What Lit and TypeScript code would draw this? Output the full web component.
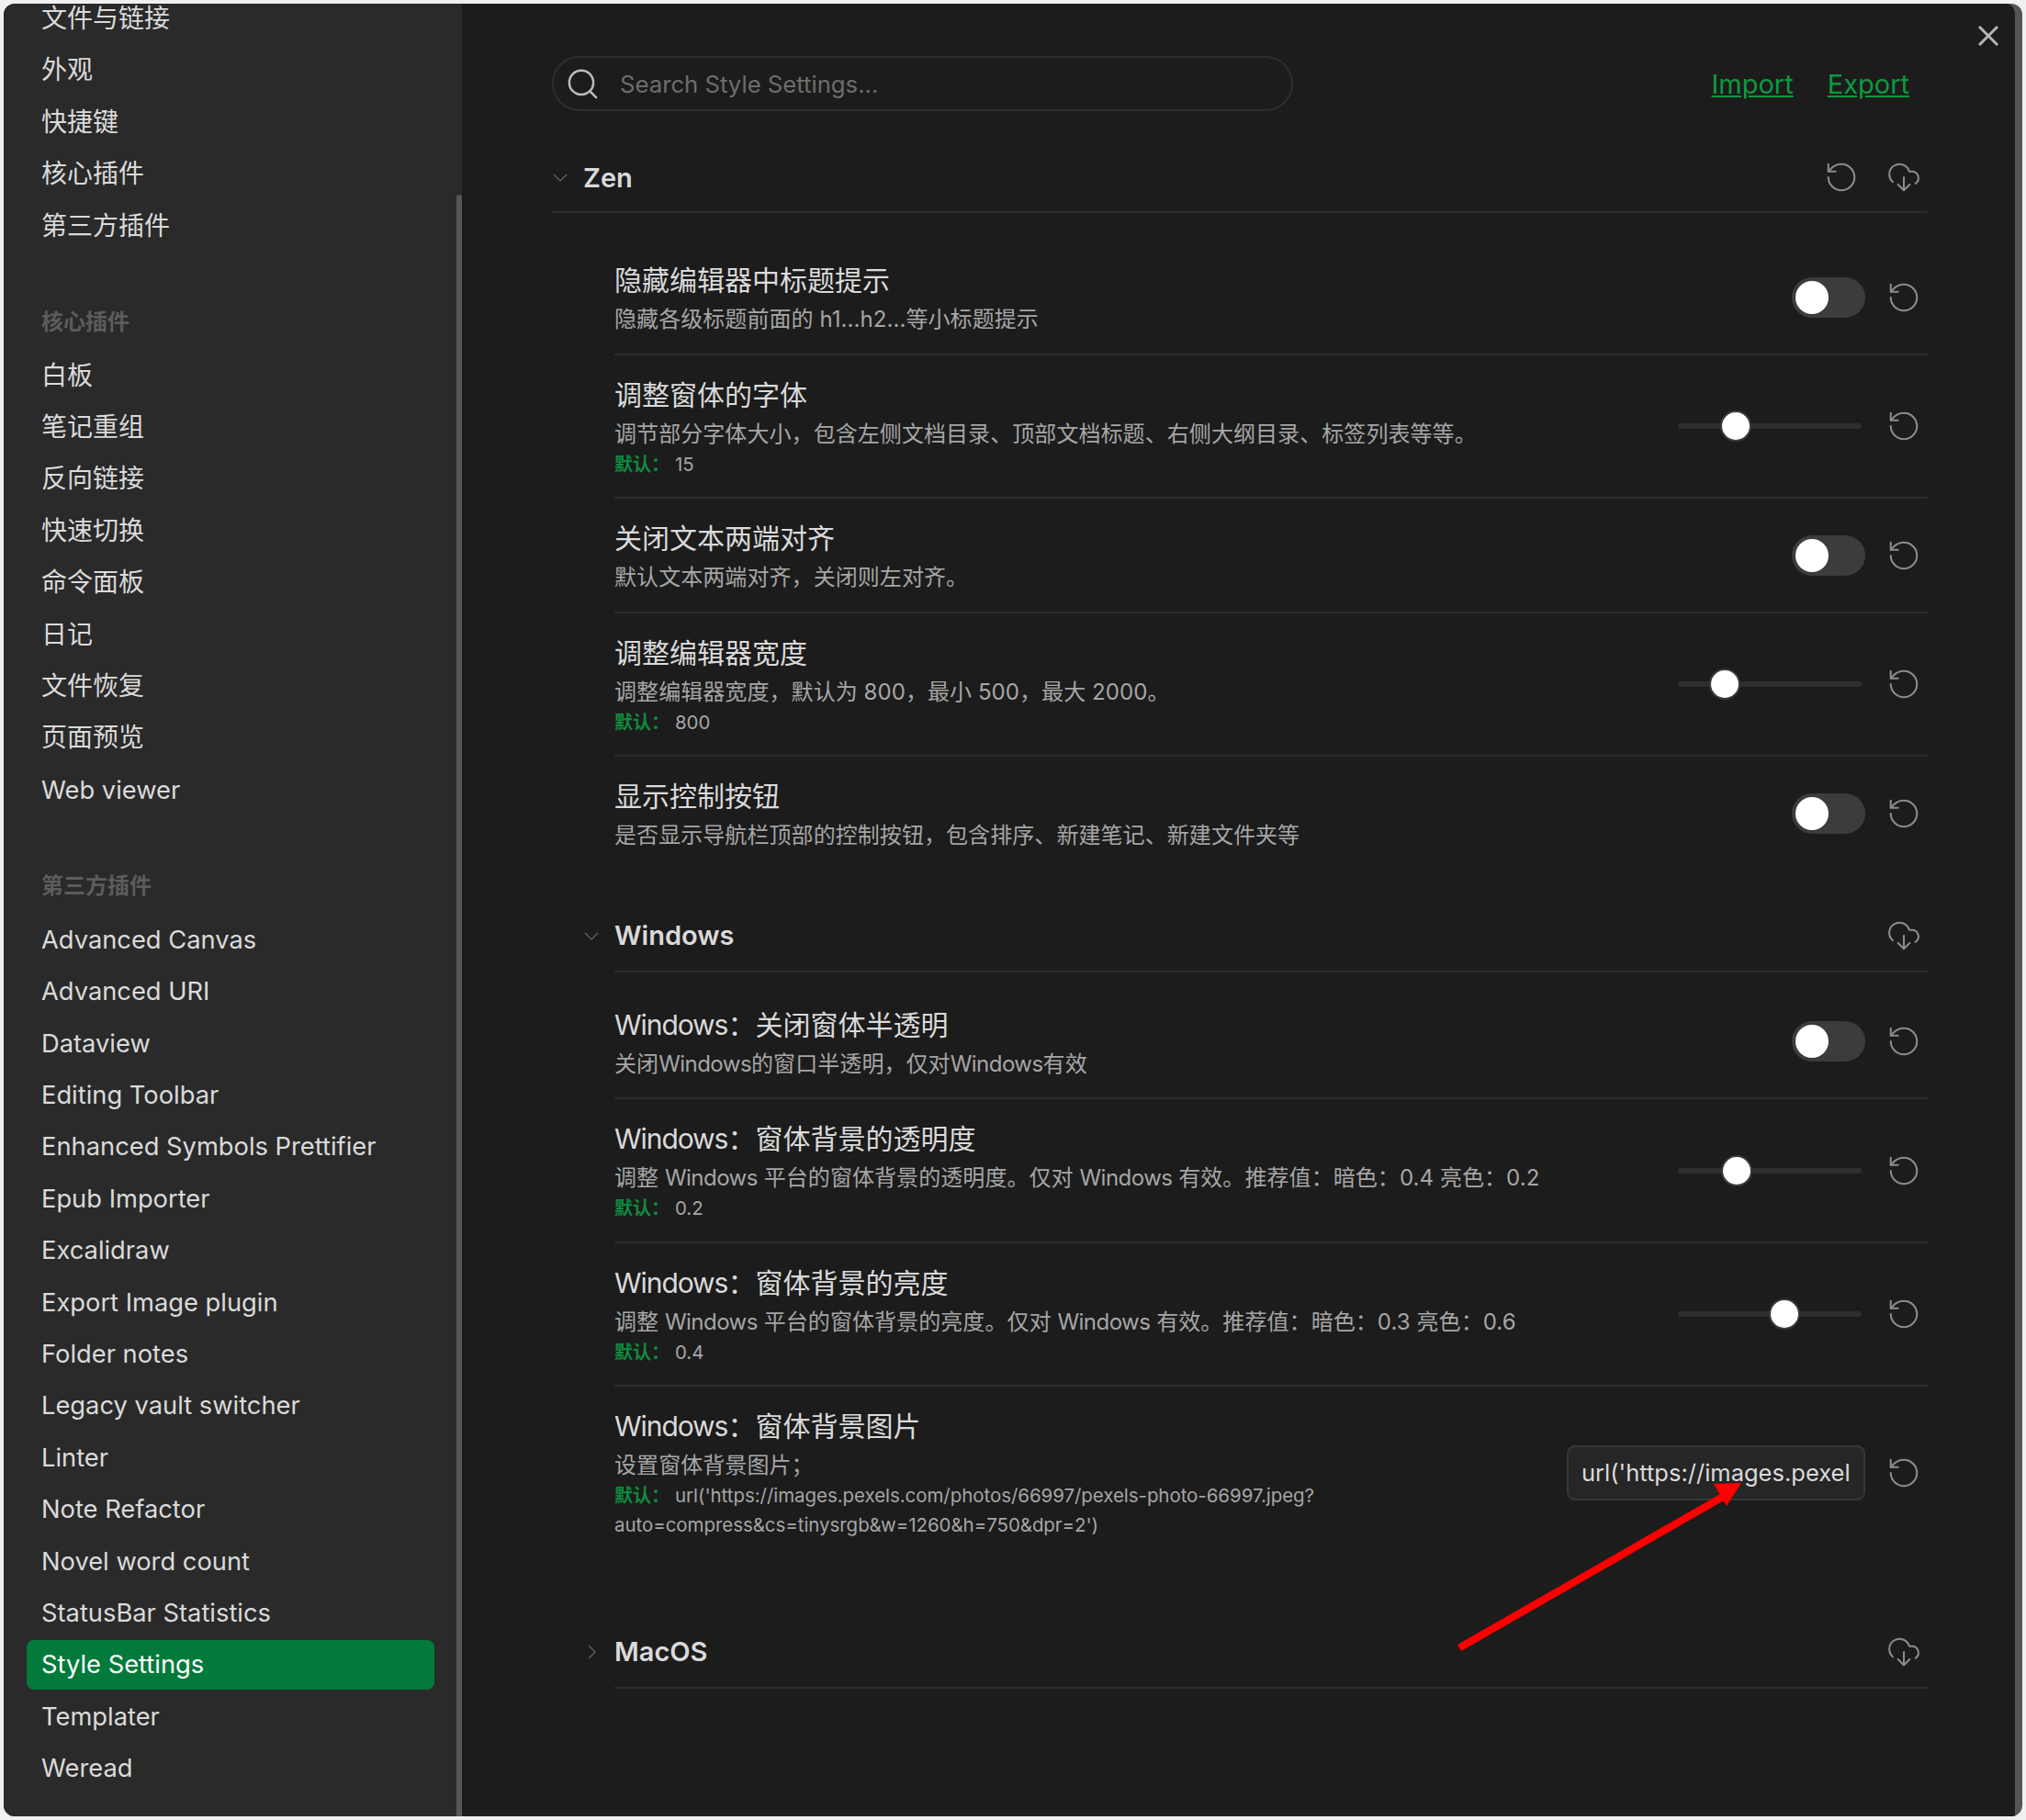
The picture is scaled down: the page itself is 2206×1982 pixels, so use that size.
// app.ts
import { LitElement, html, css, svg } from 'lit';
import { customElement } from 'lit/decorators.js';

type Setting = {
  title: string;
  desc: string;
  control: 'toggle' | 'slider' | 'text';
  def?: string;
  thumb?: number; // slider thumb centre, px from the track start
};

const CORE_ITEMS = ['白板', '笔记重组', '反向链接', '快速切换', '命令面板', '日记', '文件恢复', '页面预览', 'Web viewer'];
const PLUGIN_ITEMS = [
  'Advanced Canvas', 'Advanced URI', 'Dataview', 'Editing Toolbar', 'Enhanced Symbols Prettifier',
  'Epub Importer', 'Excalidraw', 'Export Image plugin', 'Folder notes', 'Legacy vault switcher',
  'Linter', 'Note Refactor', 'Novel word count', 'StatusBar Statistics', 'Style Settings',
  'Templater', 'Weread',
];

const ZEN: Setting[] = [
  { title: '隐藏编辑器中标题提示', desc: '隐藏各级标题前面的 h1...h2...等小标题提示', control: 'toggle' },
  { title: '调整窗体的字体', desc: '调节部分字体大小，包含左侧文档目录、顶部文档标题、右侧大纲目录、标签列表等等。', control: 'slider', def: '15', thumb: 63 },
  { title: '关闭文本两端对齐', desc: '默认文本两端对齐，关闭则左对齐。', control: 'toggle' },
  { title: '调整编辑器宽度', desc: '调整编辑器宽度，默认为 800，最小 500，最大 2000。', control: 'slider', def: '800', thumb: 51 },
  { title: '显示控制按钮', desc: '是否显示导航栏顶部的控制按钮，包含排序、新建笔记、新建文件夹等', control: 'toggle' },
];

const WINDOWS: Setting[] = [
  { title: 'Windows：关闭窗体半透明', desc: '关闭Windows的窗口半透明，仅对Windows有效', control: 'toggle' },
  { title: 'Windows：窗体背景的透明度', desc: '调整 Windows 平台的窗体背景的透明度。仅对 Windows 有效。推荐值：暗色：0.4 亮色：0.2', control: 'slider', def: '0.2', thumb: 64 },
  { title: 'Windows：窗体背景的亮度', desc: '调整 Windows 平台的窗体背景的亮度。仅对 Windows 有效。推荐值：暗色：0.3 亮色：0.6', control: 'slider', def: '0.4', thumb: 116 },
];

const resetIcon = html`<svg class="icon" viewBox="0 0 24 24" fill="none" stroke="currentColor" stroke-width="1.3" stroke-linecap="round" stroke-linejoin="round">
  ${svg`<path d="M3 12a9 9 0 1 0 9-9 9.75 9.75 0 0 0-6.74 2.74L3 8"></path><path d="M3 3v5h5"></path>`}
</svg>`;

const cloudIcon = html`<svg class="icon" viewBox="0 0 24 24" fill="none" stroke="currentColor" stroke-width="1.3" stroke-linecap="round" stroke-linejoin="round">
  ${svg`<path d="M4.393 15.269A7 7 0 1 1 15.71 8h1.79a4.5 4.5 0 0 1 2.436 8.284"></path><path d="M12 12v9"></path><path d="m8 17 4 4 4-4"></path>`}
</svg>`;

// "Windows" runs a little narrower in the reference than Inter's default
const tight = (text: string) =>
  text.split(/(Windows)/).map((part) => (part === 'Windows' ? html`<span class="tight">${part}</span>` : part));

const navItem = (t: string) => {
  const latin = /^[A-Za-z ]+$/.test(t);
  return html`<div class="item ${latin ? 'latin' : ''} ${t === 'Style Settings' ? 'active' : ''}">${t}</div>`;
};

@customElement('app-root')
export class AppRoot extends LitElement {
  renderSetting(s: Setting) {
    return html`
      <div class="row">
        <div class="info">
          <div class="title">${tight(s.title)}</div>
          <div class="desc">${tight(s.desc)}</div>
          ${s.def ? html`<div class="def"><b>默认：</b><span>${s.def}</span></div>` : ''}
        </div>
        ${this.renderControl(s)}
        <div class="reset">${resetIcon}</div>
      </div>
    `;
  }

  renderControl(s: Setting) {
    if (s.control === 'toggle') {
      return html`<div class="toggle"><div class="toggle-thumb"></div></div>`;
    }
    if (s.control === 'slider') {
      return html`<div class="slider"><div class="slider-thumb" style="left:${s.thumb}px"></div></div>`;
    }
    return html`<input class="text-input" type="text" .value=${"url('https://images.pexels.com/photos/66997/pexels-photo-66997.jpeg"} />`;
  }

  render() {
    return html`
      <div class="window">
        <nav class="sidebar">
          <div class="nav">
            <div class="list first">${['文件与链接', '外观', '快捷键', '核心插件', '第三方插件'].map(navItem)}</div>
            <div class="group-label">核心插件</div>
            <div class="list">${CORE_ITEMS.map(navItem)}</div>
            <div class="group-label">第三方插件</div>
            <div class="list">${PLUGIN_ITEMS.map(navItem)}</div>
          </div>
          <div class="nav-scroll"></div>
        </nav>

        <main class="main">
          <div class="topbar">
            <div class="search">
              <svg class="search-icon" viewBox="0 0 24 24" fill="none" stroke="currentColor" stroke-width="1.6" stroke-linecap="round">
                ${svg`<circle cx="11" cy="11" r="8.5"></circle><path d="m21.5 21.5-4.4-4.4"></path>`}
              </svg>
              <span class="placeholder">Search Style Settings...</span>
            </div>
            <div class="links"><a>Import</a><a>Export</a></div>
          </div>

          <div class="head">
            <svg class="chev" viewBox="0 0 20 20" fill="none" stroke="currentColor" stroke-width="1.2">${svg`<path d="M3 7l7 7 7-7"></path>`}</svg>
            <span class="head-name">Zen</span>
            <div class="head-actions"><div class="reset">${resetIcon}</div><div class="reset">${cloudIcon}</div></div>
          </div>
          <div class="body zen">${ZEN.map((s) => this.renderSetting(s))}</div>

          <div class="head nested windows">
            <svg class="chev" viewBox="0 0 20 20" fill="none" stroke="currentColor" stroke-width="1.2">${svg`<path d="M3 7l7 7 7-7"></path>`}</svg>
            <span class="head-name">Windows</span>
            <div class="head-actions"><div class="reset">${cloudIcon}</div></div>
          </div>
          <div class="body win">
            ${WINDOWS.map((s) => this.renderSetting(s))}
            <div class="row">
              <div class="info">
                <div class="title">${tight('Windows：窗体背景图片')}</div>
                <div class="desc">设置窗体背景图片；</div>
                <div class="def"><b>默认：</b><span>url('https://images.pexels.com/photos/66997/pexels-photo-66997.jpeg?<br />auto=compress&amp;cs=tinysrgb&amp;w=1260&amp;h=750&amp;dpr=2')</span></div>
              </div>
              ${this.renderControl({ title: '', desc: '', control: 'text' })}
              <div class="reset">${resetIcon}</div>
            </div>
          </div>

          <div class="head nested macos">
            <svg class="chev" viewBox="0 0 20 20" fill="none" stroke="currentColor" stroke-width="1.2">${svg`<path d="M7 3l7 7-7 7"></path>`}</svg>
            <span class="head-name">MacOS</span>
            <div class="head-actions"><div class="reset">${cloudIcon}</div></div>
          </div>
        </main>

        <svg class="close" viewBox="0 0 22 22" fill="none" stroke="currentColor" stroke-width="3">${svg`<path d="M1 1l20 20M21 1L1 21"></path>`}</svg>

        <svg class="arrow" viewBox="0 0 320 190">
          ${svg`<polygon fill="#ff0000" points="1,180 5,187 292,22.5 288,15.5"></polygon><polygon fill="#ff0000" points="310,4 280,5 294,29"></polygon>`}
        </svg>
      </div>
    `;
  }

  static styles = css`
    :host {
      display: block;
      width: 2206px;
      height: 1982px;
      padding: 4px;
      box-sizing: border-box;
      background: #f0f0f0;
      font-family: Inter, 'Noto Sans CJK SC', sans-serif;
      color: #dadada;
    }
    * {
      box-sizing: border-box;
    }
    .window {
      position: relative;
      display: flex;
      width: 100%;
      height: 100%;
      overflow: hidden;
      border-radius: 12px;
      background: #555;
    }

    .sidebar {
      display: flex;
      flex: none;
      width: 499px;
      background: #2a2a2a;
      overflow: hidden;
    }
    .nav {
      flex: 1;
      padding: 0 24px 0 25px;
    }
    .nav-scroll {
      flex: none;
      width: 6px;
      margin-top: 208px;
      background: #565656;
      border-radius: 3px 3px 0 0;
    }
    .list {
      display: flex;
      flex-direction: column;
      gap: 3px;
    }
    .list.first {
      margin-top: -10px;
    }
    .item {
      height: 53.4px;
      line-height: 53.4px;
      padding-left: 16px;
      font-size: 28px;
      border-radius: 8px;
      white-space: nowrap;
    }
    .item.latin {
      font-size: 27.3px;
    }
    .item.active {
      background: #027a3b;
      color: #fff;
    }
    .group-label {
      height: 32px;
      line-height: 32px;
      margin: 62.2px 0 15.5px;
      padding-left: 16px;
      font-size: 24px;
      font-weight: 700;
      color: #5c5c5c;
    }

    .main {
      flex: 1;
      min-width: 0;
      margin-right: 8px;
      padding: 57px 95px 0 98px;
      background: #1c1c1c;
      border-top-right-radius: 10px;
    }
    .topbar {
      display: flex;
      align-items: center;
      justify-content: space-between;
      height: 60px;
    }
    .search {
      display: flex;
      align-items: center;
      width: 807px;
      height: 60px;
      padding-left: 13px;
      gap: 22px;
      border: 2px solid #2e2e2e;
      border-radius: 30px;
    }
    .search-icon {
      flex: none;
      width: 37px;
      height: 37px;
      color: #bdbdbd;
    }
    .placeholder {
      font-size: 25.7px;
      color: #6d6d6d;
    }
    .links {
      display: flex;
      gap: 37px;
      padding-right: 20px;
      font-size: 29px;
    }
    .links a {
      color: #0c9a40;
      text-decoration: underline;
    }

    .head {
      display: flex;
      align-items: center;
      height: 76px;
      margin-top: 35px;
      border-bottom: 2px solid #2c2c2c;
      padding-left: 34px;
    }
    .head.nested {
      margin-left: 68px;
      padding-left: 0;
    }
    .head.windows {
      height: 78px;
      margin-top: 34px;
    }
    .head.macos {
      height: 78px;
      margin-top: 64px;
    }
    .chev {
      flex: none;
      width: 20px;
      height: 20px;
      margin: 0 15px 0 -35px;
      color: #666;
    }
    .head-name {
      flex: 1;
      font-size: 29px;
      font-weight: 600;
    }
    .head-actions {
      display: flex;
      gap: 38px;
      padding-right: 11px;
    }

    .body {
      margin-left: 68px;
    }
    .body.zen {
      padding-top: 30px;
    }
    .body.win {
      padding-top: 14px;
    }
    .row {
      display: flex;
      align-items: center;
      padding: 22px 11px 15.5px 0;
      border-bottom: 2px solid #2c2c2c;
    }
    .body > .row:last-child {
      border-bottom: none;
    }
    .info {
      flex: 1;
      min-width: 0;
    }
    .title {
      font-size: 30px;
      line-height: 43px;
      color: #dadada;
    }
    .desc {
      font-size: 24px;
      line-height: 42px;
      letter-spacing: 0.07px;
      color: #a6a6a6;
    }
    .def {
      margin: -4px 0 4px;
      font-size: 20px;
      line-height: 32px;
      color: #a6a6a6;
    }
    .def b {
      font-weight: 700;
      color: #0f8a3c;
      margin-right: 6px;
    }
    .def span {
      font-size: 20.4px;
    }
    .tight {
      letter-spacing: -0.035em;
    }
    .desc .tight {
      letter-spacing: -0.022em;
    }

    .toggle {
      flex: none;
      width: 80px;
      height: 44px;
      margin-bottom: 6px;
      padding: 4px;
      border-radius: 22px;
      background: #3c3c3c;
    }
    .toggle-thumb {
      width: 36px;
      height: 36px;
      border-radius: 50%;
      background: #fff;
    }
    .slider {
      position: relative;
      flex: none;
      width: 200px;
      height: 6px;
      margin: 0 4px 6px 0;
      border-radius: 3px;
      background: #2e2e2e;
    }
    .slider-thumb {
      position: absolute;
      top: -14px;
      width: 34px;
      height: 34px;
      margin-left: -17px;
      border: 2px solid #3a3a3a;
      border-radius: 50%;
      background: #fff;
    }
    .text-input {
      flex: none;
      width: 325px;
      height: 60px;
      margin-bottom: 6px;
      padding: 0 14px;
      border: 2px solid #383838;
      border-radius: 9px;
      background: #262626;
      color: #dadada;
      font-family: inherit;
      font-size: 25.5px;
      outline: none;
    }
    .reset {
      flex: none;
      display: flex;
      width: 30px;
      height: 30px;
      margin: 0 0 6px 27px;
      color: #8c8c8c;
    }
    .head-actions .reset {
      margin: 0;
    }
    .icon {
      flex: none;
      width: 38px;
      height: 38px;
      margin: -4px;
    }

    .close {
      position: absolute;
      top: 24px;
      right: 26px;
      width: 22px;
      height: 22px;
      color: #b5b5b5;
    }
    .arrow {
      position: absolute;
      left: 1582px;
      top: 1607px;
      width: 320px;
      height: 190px;
    }
  `;
}
